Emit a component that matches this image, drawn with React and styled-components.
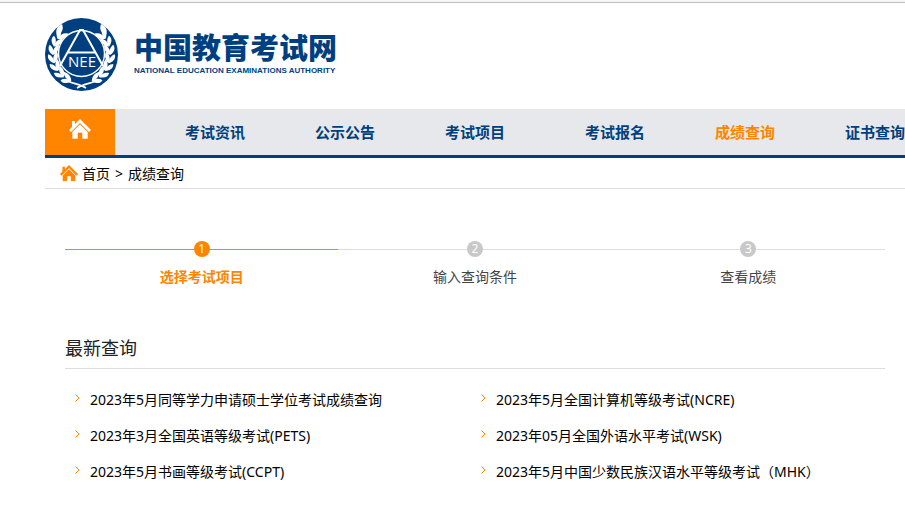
import React from 'react';
import styled, { createGlobalStyle } from 'styled-components';

const GlobalStyle = createGlobalStyle`
    * {
        box-sizing: border-box;
    }
    body {
        margin: 0;
        background: #fff;
        color: #000;
        font-family: 'Noto Sans', 'Noto Sans CJK SC', sans-serif;
        font-size: 14px;
        line-height: 20px;
    }
    a {
        color: inherit;
        text-decoration: none;
    }
    h1, h2, p, ul, ol {
        margin: 0;
        padding: 0;
        font-weight: normal;
    }
    ul, ol {
        list-style: none;
    }
`

const navGroups = [
    ['考试资讯', '公示公告', '考试项目'],
    ['考试报名', '成绩查询', '证书查询'],
]

const steps = ['选择考试项目', '输入查询条件', '查看成绩']

const queries = [
    '2023年5月同等学力申请硕士学位考试成绩查询',
    '2023年5月全国计算机等级考试(NCRE)',
    '2023年3月全国英语等级考试(PETS)',
    '2023年05月全国外语水平考试(WSK)',
    '2023年5月书画等级考试(CCPT)',
    '2023年5月中国少数民族汉语水平等级考试（MHK）',
]

// degrees round the emblem, from the foot of the wreath to its tip
const leafAngles = [28, 45, 62, 79, 96, 113, 130]

function Wreath() {
    return (
        <g fill="#fff">
            <path d="M41 70C35 66 29 66 22 63" fill="none" stroke="#fff" strokeWidth="1.6" />
            {leafAngles.map((angle) => (
                <g key={angle} transform={`rotate(${angle - 90} 36.5 36.5)`}>
                    <path d="M8 40C3 37 2 33 4 30C7 32 9 35 8 40Z" />
                    <path d="M8 40C7 35 9 31 13 29C14 34 12 38 8 40Z" />
                </g>
            ))}
            <path d="M12 17C10 13 12 8 17 6C19 11 17 15 12 17Z" />
        </g>
    )
}

function Emblem() {
    return (
        <svg width="73" height="73" viewBox="0 0 73 73" aria-hidden="true">
            <circle cx="36.5" cy="36.5" r="36.5" fill="#003f7f" />
            <Wreath />
            <g transform="translate(73 0) scale(-1 1)"><Wreath /></g>
            <circle cx="36.5" cy="35.5" r="23" fill="#003f7f" stroke="#fff" strokeWidth="1.4" />
            <path d="M15 48L35 12H38L58 48M23 34.5H50" fill="none" stroke="#fff" strokeWidth="2" />
            <text x="37" y="49" textAnchor="middle" fill="#fff" fontFamily="Open Sans, sans-serif" fontSize="15" fontWeight="500">NEE</text>
        </svg>
    )
}

function HomeIcon({ size, color, line }) {
    return (
        <svg width={size} height={size} viewBox="0 0 22 22" aria-hidden="true">
            <path d="M0 11L3 8V2H6V5L11 0L22 11L20 13L11 4L2 13Z" fill={color} />
            <path d="M3 13L11 5L19 13V20H13V14H9V20H3Z" fill={color} stroke={line} strokeWidth="0.6" />
        </svg>
    )
}

function App() {
    return (
        <>
            <GlobalStyle />
            <TopLine />
            <Page>
                <Header>
                    <Emblem />
                    <Brand>
                        <BrandName>中国教育考试网</BrandName>
                        <BrandSub>NATIONAL EDUCATION EXAMINATIONS AUTHORITY</BrandSub>
                    </Brand>
                </Header>
                <Nav>
                    <HomeLink href="#" aria-label="首页">
                        <HomeIcon size={22} color="#fff" line="#ff8400" />
                    </HomeLink>
                    <NavGroups>
                        {navGroups.map((group) => (
                            <NavGroup key={group[0]}>
                                {group.map((name) => (
                                    <NavLink href="#" key={name} $active={name === '成绩查询'}>{name}</NavLink>
                                ))}
                            </NavGroup>
                        ))}
                    </NavGroups>
                </Nav>
                <Crumbs>
                    <HomeIcon size={18} color="#ff8400" line="#fff" />
                    <a href="#">首页</a>
                    <Separator>&gt;</Separator>
                    <a href="#">成绩查询</a>
                </Crumbs>
                <Content>
                    <Steps>
                        {steps.map((name, i) => (
                            <Step key={name} $active={i === 0}>
                                <StepMark $active={i === 0}>
                                    <StepNumber $active={i === 0}>{i + 1}</StepNumber>
                                </StepMark>
                                {name}
                            </Step>
                        ))}
                    </Steps>
                    <Title>最新查询</Title>
                    <QueryList>
                        {queries.map((name) => (
                            <Query key={name}>
                                <Arrow viewBox="0 0 5 8" aria-hidden="true">
                                    <path d="M0.5 0.5L4 4L0.5 7.5" />
                                </Arrow>
                                <a href="#">{name}</a>
                            </Query>
                        ))}
                    </QueryList>
                </Content>
            </Page>
        </>
    )
}

const TopLine = styled.div`
    height: 3px;
    background: #f5f5f5;
    border-bottom: 1px solid #c0c0c0;
`
const Page = styled.div`
    margin-left: 45px;
    overflow: hidden;
`
const Header = styled.header`
    display: flex;
    gap: 16px;
    padding: 15px 0 18px;
`
const Brand = styled.div`
    padding-top: 8px;
    color: #003f7f;
    white-space: nowrap;
`
const BrandName = styled.h1`
    font-family: 'Noto Sans CJK SC', sans-serif;
    font-size: 29px;
    font-weight: 900;
    line-height: 40px;
`
const BrandSub = styled.p`
    font-family: 'Liberation Sans', sans-serif;
    font-size: 8px;
    font-weight: bold;
    line-height: 10px;
`
const Nav = styled.nav`
    display: flex;
    height: 49px;
    background: #e7e8eb;
    border-bottom: 3px solid #003f7f;
`
const HomeLink = styled.a`
    display: flex;
    flex: none;
    justify-content: center;
    width: 70px;
    padding-top: 10px;
    background: #ff8400;
`
const NavGroups = styled.div`
    display: flex;
    gap: 10px;
    padding-left: 35px;
`
const NavGroup = styled.div`
    display: flex;
`
const NavLink = styled.a`
    flex: none;
    width: 130px;
    color: ${props => props.$active ? '#ff8400' : '#003f7f'};
    font-size: 15px;
    font-weight: bold;
    line-height: 46px;
    text-align: center;
`
const Crumbs = styled.div`
    display: flex;
    align-items: center;
    gap: 4px;
    height: 31px;
    padding: 2px 0 0 15px;
    border-bottom: 1px solid #ddd;
`
const Separator = styled.span`
    padding: 0 1px;
`
const Content = styled.main`
    padding: 52px 20px 24px;
`
const Steps = styled.ol`
    display: flex;
`
const Step = styled.li`
    flex: 1;
    color: ${props => props.$active ? '#ff8400' : '#444'};
    font-weight: ${props => props.$active ? 'bold' : 'normal'};
    text-align: center;
`
const StepMark = styled.div`
    display: flex;
    align-items: center;
    margin-bottom: 10px;
    &::before, &::after {
        content: '';
        flex: 1;
        height: 1px;
        background: ${props => props.$active ? '#ff8400' : '#ddd'};
    }
`
const StepNumber = styled.span`
    width: 16px;
    height: 16px;
    border-radius: 50%;
    background: ${props => props.$active ? '#ff8400' : '#c8c8c8'};
    color: #fff;
    font-size: 12px;
    font-weight: normal;
    line-height: 16px;
`
const Title = styled.h2`
    margin-top: 47px;
    padding-bottom: 6px;
    border-bottom: 1px solid #ddd;
    color: #222;
    font-size: 18px;
    line-height: 28px;
`
const QueryList = styled.ul`
    display: grid;
    grid-template-columns: 1fr 1fr;
    column-gap: 2px;
    padding: 13px 0 0 10px;
`
const Query = styled.li`
    display: flex;
    align-items: center;
    gap: 10px;
    line-height: 36px;
    white-space: nowrap;
`
const Arrow = styled.svg`
    width: 5px;
    height: 8px;
    margin-bottom: 4px;
    fill: none;
    stroke: #ff8400;
    stroke-width: 1;
`

export default App;
